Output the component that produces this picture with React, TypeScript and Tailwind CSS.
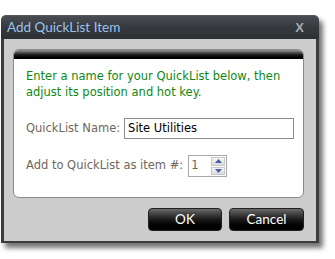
export default function App() {
  return (
    <div className="w-[335px] h-[259px] bg-white pt-[15px] pl-px" style={{ fontFamily: "Tahoma, 'DejaVu Sans', sans-serif" }}>
      <div className="w-[318px] h-[228px] flex flex-col rounded-t-[5px] shadow-[4px_5px_5px_rgba(0,0,0,0.55)]">
        {/* Title bar */}
        <div className="h-[24px] shrink-0 flex items-center justify-between px-[6px] rounded-t-[5px] bg-gradient-to-b from-[#4a4d52] via-[#35383c] to-[#2e3034] border-t border-[#55585c]">
          <span className="text-[13.5px] text-[#9cc3ef] leading-none" style={{ fontFamily: "Lato, 'Open Sans', sans-serif" }}>
            Add QuickList Item
          </span>
          <span className="text-[13px] font-bold text-[#a4acb6] leading-none mr-[9px]" style={{ fontFamily: "'Liberation Sans', sans-serif" }}>
            X
          </span>
        </div>

        {/* Body */}
        <div className="flex-1 flex flex-col bg-[#cccccc] border-x-[3px] border-b-[2px] border-[#3a3c3f] pl-[9px] pt-[10px]">
          <div className="w-[291px] h-[149px] bg-white rounded-[6px] border border-[#8a8a8a] overflow-hidden flex flex-col">
            <div className="h-[9px] shrink-0 bg-gradient-to-b from-[#9a9a9a] via-[#222] to-black" />
            <div className="pl-[12px] pt-[9px] text-[11.5px] text-[#0b8a14] leading-[16px]">
              <p>Enter a name for your QuickList below, then</p>
              <p>adjust its position and hot key.</p>
            </div>
            <div className="flex items-center pl-[12px] mt-[18px] h-[21px]">
              <span className="text-[11.5px] text-[#6e6660] mr-[4px]">QuickList Name:</span>
              <div className="w-[170px] h-[21px] border border-[#8c8c8c] flex items-center pl-[3px] text-[11.5px] text-black">
                Site Utilities
              </div>
            </div>
            <div className="flex items-center pl-[12px] mt-[16px] h-[22px]">
              <span className="text-[11.5px] text-[#6e6660] mr-[5px]">Add to QuickList as item #:</span>
              <div className="w-[39px] h-[22px] border border-[#a8a8a8] flex items-stretch">
                <span className="flex-1 pl-[2px] text-[11.5px] text-[#6e6660] leading-[18px]">1</span>
                <div className="w-[14px] flex flex-col gap-px py-px mr-px">
                  <div className="flex-1 bg-gradient-to-b from-[#f4f4f4] to-[#dcdcdc] border border-[#c8c8c8] flex items-center justify-center">
                    <svg width="7" height="4" viewBox="0 0 7 4"><path d="M3.5 0L7 4H0z" fill="#4a5fa8" /></svg>
                  </div>
                  <div className="flex-1 bg-gradient-to-b from-[#f4f4f4] to-[#dcdcdc] border border-[#c8c8c8] flex items-center justify-center">
                    <svg width="7" height="4" viewBox="0 0 7 4"><path d="M0 0H7L3.5 4z" fill="#4a5fa8" /></svg>
                  </div>
                </div>
              </div>
            </div>
          </div>

          <div className="flex justify-end gap-[7px] mt-[10px] mr-[12px]">
            <button className="w-[74px] h-[23px] rounded-[4px] bg-gradient-to-b from-[#6a6a6a] via-[#1a1a1a] to-black border border-[#222] text-white text-[13.5px] leading-none" style={{ fontFamily: "Lato, sans-serif" }}>
              OK
            </button>
            <button className="w-[75px] h-[23px] rounded-[4px] bg-gradient-to-b from-[#6a6a6a] via-[#1a1a1a] to-black border border-[#222] text-white text-[13.5px] leading-none" style={{ fontFamily: "Lato, sans-serif" }}>
              Cancel
            </button>
          </div>
        </div>
      </div>
    </div>
  );
}
